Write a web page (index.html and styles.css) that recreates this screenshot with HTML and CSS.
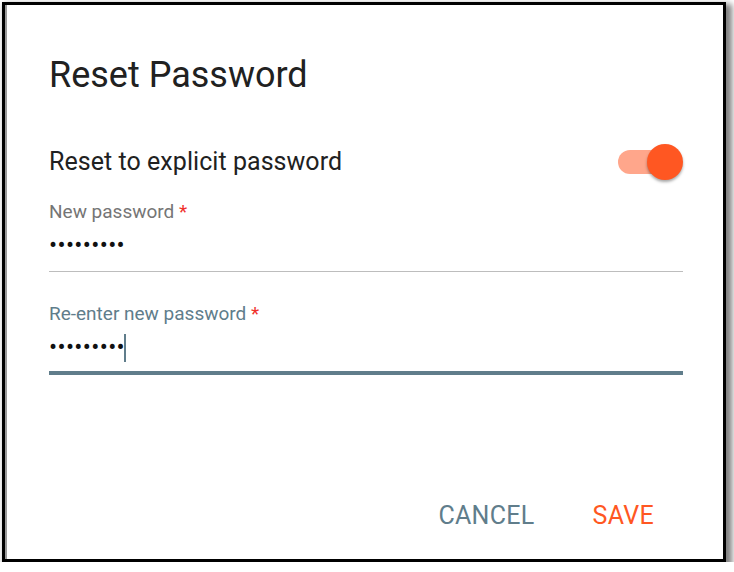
FILE: index.html
```html
<!DOCTYPE html>
<html lang="en">
<head>
<meta charset="utf-8">
<title>Reset Password</title>
<link rel="stylesheet" href="styles.css">
</head>
<body>
<div class="dialog">
  <h2 class="title">Reset Password</h2>
  <div class="toggle-row">
    <span class="toggle-label">Reset to explicit password</span>
    <span class="switch" role="switch" aria-checked="true">
      <span class="track"></span>
      <span class="thumb"></span>
    </span>
  </div>
  <div class="field">
    <label class="label">New password <span class="req">*</span></label>
    <div class="value">•••••••••</div>
    <div class="line"></div>
  </div>
  <div class="field focused">
    <label class="label">Re-enter new password <span class="req">*</span></label>
    <div class="value">•••••••••<span class="caret"></span></div>
    <div class="line"></div>
  </div>
  <div class="actions">
    <button class="btn cancel">CANCEL</button>
    <button class="btn save">SAVE</button>
  </div>
</div>
</body>
</html>
```
FILE: styles.css
```css
html, body {
  margin: 0;
  padding: 0;
  background: #ffffff;
}
body {
  font-family: Roboto, "Liberation Sans", Arial, sans-serif;
  color: rgba(0, 0, 0, 0.87);
}
.dialog {
  box-sizing: border-box;
  margin: 2px 0 0 2px;
  width: 724px;
  height: 560px;
  border: 3px solid #000;
  background: #fff;
  box-shadow: inset 2px 0 0 #9a9a9a, 4px 4px 6px 2px rgba(0, 0, 0, 0.5);
  padding: 50px 40px 13px 44px;
  display: flex;
  flex-direction: column;
}
.title {
  margin: 0;
  font-size: 36px;
  line-height: 40px;
  font-weight: 400;
  color: #212121;
}
.toggle-row {
  margin-top: 49px;
  height: 36px;
  display: flex;
  align-items: center;
  justify-content: space-between;
}
.toggle-label {
  font-size: 25px;
  line-height: 28px;
  letter-spacing: 0.05px;
  color: #212121;
}
.switch {
  position: relative;
  width: 65px;
  height: 36px;
}
.track {
  position: absolute;
  left: 0;
  top: 6px;
  width: 60px;
  height: 24px;
  border-radius: 12px;
  background: #ffa68b;
}
.thumb {
  position: absolute;
  right: 0;
  top: 0;
  width: 36px;
  height: 36px;
  border-radius: 50%;
  background: #ff5722;
  box-shadow: 0 2px 3px rgba(0, 0, 0, 0.35);
}
.field {
  margin-top: 20px;
  display: flex;
  flex-direction: column;
}
.field + .field {
  margin-top: 30px;
}
.label {
  font-size: 19px;
  line-height: 24px;
  color: #757575;
}
.focused .label {
  color: #607d8b;
}
.req {
  color: #f0302a;
}
.value {
  margin-top: 7px;
  font-size: 24px;
  line-height: 28px;
  height: 28px;
  letter-spacing: 0.35px;
  color: #111;
  display: flex;
  align-items: flex-start;
}
.caret {
  display: inline-block;
  width: 2px;
  height: 28px;
  margin-top: 1px;
  margin-left: -1px;
  background: #607d8b;
}
.line {
  margin-top: 12px;
  height: 1px;
  background: #bdbdbd;
}
.focused .line {
  margin-top: 10px;
  height: 4px;
  background: #607d8b;
}
.actions {
  margin-top: auto;
  display: flex;
  justify-content: flex-end;
}
.btn {
  border: 0;
  background: transparent;
  font-family: Roboto, "Liberation Sans", Arial, sans-serif;
  font-size: 25px;
  line-height: 60px;
  height: 60px;
  padding: 0 29px;
  letter-spacing: 0.3px;
}
.save {
  color: #ff5722;
}
.cancel {
  color: #607d8b;
}
```
